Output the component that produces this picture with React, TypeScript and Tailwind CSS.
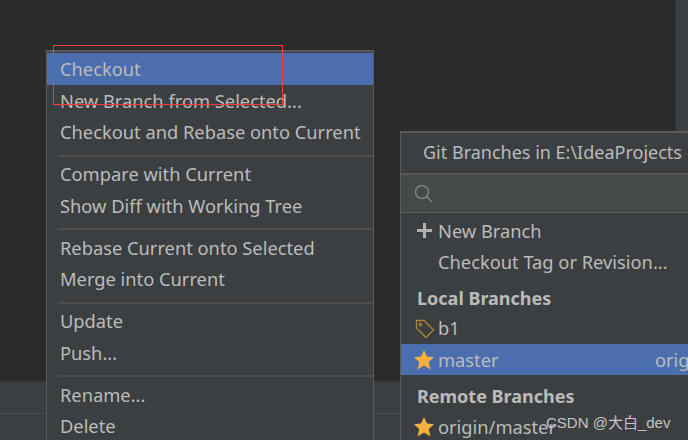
const leftGroups = [
  ["Checkout", "New Branch from Selected...", "Checkout and Rebase onto Current"],
  ["Compare with Current", "Show Diff with Working Tree"],
  ["Rebase Current onto Selected", "Merge into Current"],
  ["Update", "Push..."],
  ["Rename...", "Delete"],
];

function Star() {
  return (
    <svg width="20" height="20" viewBox="0 0 20 20" className="shrink-0">
      <path d="M10 0 L13 6.6 L20 7.2 L14.8 12 L16.4 19.5 L10 15.6 L3.6 19.5 L5.2 12 L0 7.2 L7 6.6 Z" fill="#f4b03e" />
    </svg>
  );
}

function Tag() {
  return (
    <svg width="20" height="20" viewBox="0 0 20 20" fill="none" stroke="#a88436" strokeWidth="1.3" className="shrink-0">
      <path d="M1.5 1.5 H9 L18.5 11 L11 18.5 L1.5 9 Z" />
      <circle cx="5.5" cy="5.5" r="1.2" />
    </svg>
  );
}

export default function App() {
  return (
    <div className="relative flex flex-col w-[688px] h-[440px] overflow-hidden bg-[#2b2b2b] text-[#bbbbbb] text-[18.3px] font-['Noto_Sans','Open_Sans',sans-serif]">
      {/* ide background */}
      <div className="flex justify-end h-[380px]">
        <div className="w-[13px] bg-[#3c3f41] border-l border-[#323232]" />
      </div>
      <div className="flex-1 bg-[#3c3f41] border-t-2 border-[#323232]">
        <div className="mt-[31px] border-t border-[#4a4c4e]" />
      </div>

      {/* context menu */}
      <div className="absolute left-[46px] top-[50px] w-[328px] h-[400px] bg-[#3c3f41] border border-t-2 border-[#5a5a5a] border-b-0 pt-[1px]">
        {leftGroups.map((group, i) => (
          <div key={i} className={i > 0 ? "mt-[7px] ml-[11px] border-t-2 border-[#4d4d4d] pt-[1.5px]" : ""}>
            {group.map((label, j) => (
              <div
                key={label}
                className={`h-[31.5px] leading-[31px] whitespace-nowrap ${i > 0 ? "pl-[2px]" : "pl-[13px]"} ${i === 0 && j === 0 ? "bg-[#4b6eaf]" : ""}`}
              >
                {label}
              </div>
            ))}
          </div>
        ))}
      </div>

      {/* branches popup */}
      <div className="absolute left-[400px] top-[131px] w-[300px] h-[320px] bg-[#3c3f41] border-l border-t-2 border-[#5a5a5a]">
        <div className="h-[40px] leading-[39px] pl-[22px] text-[18px] whitespace-nowrap border-b-2 border-[#555555] box-content">
          Git Branches in E:\IdeaProjects
        </div>
        <div className="h-[38px] flex items-center pl-[13px] bg-[#45494a] border-b border-[#5e6060]">
          <svg width="20" height="20" viewBox="0 0 20 20" fill="none" stroke="#7d8183" strokeWidth="1.5">
            <circle cx="8" cy="8" r="6.5" />
            <path d="M12.5 12.5 L18 18" />
          </svg>
        </div>
        <div className="pt-[2px]">
          <div className="h-[31px] flex items-center whitespace-nowrap pl-[15px] gap-[5px]">
            <svg width="17" height="17" viewBox="0 0 17 17" className="shrink-0">
              <path d="M7 1 H10 V7 H16 V10 H10 V16 H7 V10 H1 V7 H7 Z" fill="#afb1b3" />
            </svg>
            New Branch
          </div>
          <div className="h-[31px] flex items-center whitespace-nowrap pl-[37px]">Checkout Tag or Revision...</div>
          <div className="h-[36px] flex items-center pl-[16px] pt-[6px] font-bold text-[18px]">Local Branches</div>
          <div className="h-[31px] flex items-center pl-[14px] gap-[3px]">
            <Tag />
            <span className="pb-[2px]">b1</span>
          </div>
          <div className="h-[31px] flex items-center pl-[13px] gap-[4px] bg-[#4b6eaf] whitespace-nowrap">
            <Star />
            <span className="w-[213px] shrink-0">master</span>
            origin/master
          </div>
          <div className="h-[36px] flex items-center pl-[16px] pt-[7px] font-bold text-[18px]">Remote Branches</div>
          <div className="h-[31px] flex items-center pl-[13px] gap-[4px]">
            <Star />
            origin/master
          </div>
        </div>
      </div>

      {/* watermark */}
      <div className="absolute left-[546px] top-[413px] text-[15px] leading-[20px] text-[#c4c4c4] whitespace-nowrap font-['Liberation_Sans','Noto_Sans_CJK_SC',sans-serif]">
        CSDN @大白_dev
      </div>

      {/* red selection rectangle */}
      <div className="absolute left-[53px] top-[45px] w-[230px] h-[60px] border border-[#f03c3c]" />
    </div>
  );
}
